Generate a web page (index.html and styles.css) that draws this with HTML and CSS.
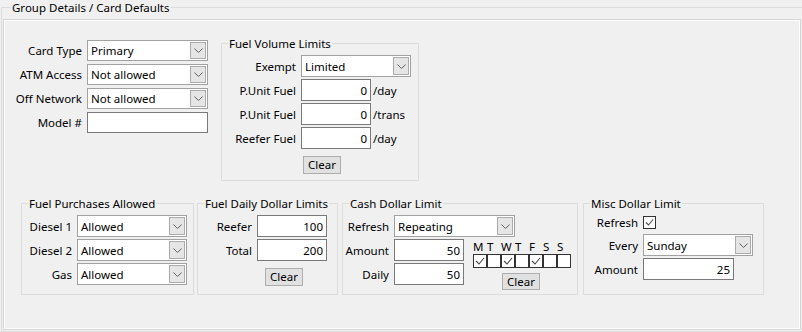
FILE: index.html
```html
<!DOCTYPE html>
<html lang="en">
<head>
  <meta charset="UTF-8">
  <title>Group Details / Card Defaults</title>
  <link rel="stylesheet" href="styles.css">
</head>
<body>

  <fieldset class="group">
    <legend>Group Details / Card Defaults</legend>
    <div class="panel">

      <div class="top-row">
        <div class="form card-form">
          <label>Card Type</label>
          <div class="combo"><span>Primary</span><i class="drop"><svg width="9" height="5" viewBox="0 0 9 5"><polyline points="0.5,0.5 4.5,4.5 8.5,0.5"/></svg></i></div>
          <label>ATM Access</label>
          <div class="combo"><span>Not allowed</span><i class="drop"><svg width="9" height="5" viewBox="0 0 9 5"><polyline points="0.5,0.5 4.5,4.5 8.5,0.5"/></svg></i></div>
          <label>Off Network</label>
          <div class="combo"><span>Not allowed</span><i class="drop"><svg width="9" height="5" viewBox="0 0 9 5"><polyline points="0.5,0.5 4.5,4.5 8.5,0.5"/></svg></i></div>
          <label>Model #</label>
          <input class="txt model" type="text" value="">
        </div>

        <fieldset class="box fuel-volume">
          <legend>Fuel Volume Limits</legend>
          <div class="form fv-form">
            <label>Exempt</label>
            <div class="combo"><span>Limited</span><i class="drop"><svg width="9" height="5" viewBox="0 0 9 5"><polyline points="0.5,0.5 4.5,4.5 8.5,0.5"/></svg></i></div>
            <label>P.Unit Fuel</label>
            <input class="txt num" type="text" value="0">
            <span class="unit">/day</span>
            <label>P.Unit Fuel</label>
            <input class="txt num" type="text" value="0">
            <span class="unit">/trans</span>
            <label>Reefer Fuel</label>
            <input class="txt num" type="text" value="0">
            <span class="unit">/day</span>
          </div>
          <button class="clear">Clear</button>
        </fieldset>
      </div>

      <div class="bottom-row">
        <fieldset class="box purchases">
          <legend>Fuel Purchases Allowed</legend>
          <div class="form purchases-form">
            <label>Diesel 1</label>
            <div class="combo"><span>Allowed</span><i class="drop"><svg width="9" height="5" viewBox="0 0 9 5"><polyline points="0.5,0.5 4.5,4.5 8.5,0.5"/></svg></i></div>
            <label>Diesel 2</label>
            <div class="combo"><span>Allowed</span><i class="drop"><svg width="9" height="5" viewBox="0 0 9 5"><polyline points="0.5,0.5 4.5,4.5 8.5,0.5"/></svg></i></div>
            <label>Gas</label>
            <div class="combo"><span>Allowed</span><i class="drop"><svg width="9" height="5" viewBox="0 0 9 5"><polyline points="0.5,0.5 4.5,4.5 8.5,0.5"/></svg></i></div>
          </div>
        </fieldset>

        <fieldset class="box daily">
          <legend>Fuel Daily Dollar Limits</legend>
          <div class="form daily-form">
            <label>Reefer</label>
            <input class="txt num" type="text" value="100">
            <label>Total</label>
            <input class="txt num" type="text" value="200">
          </div>
          <button class="clear">Clear</button>
        </fieldset>

        <fieldset class="box cash">
          <legend>Cash Dollar Limit</legend>
          <div class="form cash-form">
            <label>Refresh</label>
            <div class="combo"><span>Repeating</span><i class="drop"><svg width="9" height="5" viewBox="0 0 9 5"><polyline points="0.5,0.5 4.5,4.5 8.5,0.5"/></svg></i></div>
            <label>Amount</label>
            <input class="txt num" type="text" value="50">
            <div class="days">
              <div class="days-grid">
                <span>M</span><span>T</span><span>W</span><span>T</span><span>F</span><span>S</span><span>S</span>
                <i class="chk on"><svg viewBox="0 0 12 12"><polyline points="2,6 5,9 10,3"/></svg></i>
                <i class="chk"></i>
                <i class="chk on"><svg viewBox="0 0 12 12"><polyline points="2,6 5,9 10,3"/></svg></i>
                <i class="chk"></i>
                <i class="chk on"><svg viewBox="0 0 12 12"><polyline points="2,6 5,9 10,3"/></svg></i>
                <i class="chk"></i>
                <i class="chk"></i>
              </div>
              <button class="clear">Clear</button>
            </div>
            <label>Daily</label>
            <input class="txt num" type="text" value="50">
          </div>
        </fieldset>

        <fieldset class="box misc">
          <legend>Misc Dollar Limit</legend>
          <div class="form misc-form">
            <label>Refresh</label>
            <i class="chk small on"><svg viewBox="0 0 11 11"><polyline points="2,5.5 4.5,8 9,2.5"/></svg></i>
            <label>Every</label>
            <div class="combo"><span>Sunday</span><i class="drop"><svg width="9" height="5" viewBox="0 0 9 5"><polyline points="0.5,0.5 4.5,4.5 8.5,0.5"/></svg></i></div>
            <label>Amount</label>
            <input class="txt num wide" type="text" value="25">
          </div>
        </fieldset>
      </div>

    </div>
  </fieldset>

</body>
</html>
```

FILE: styles.css
```css
* { box-sizing: border-box; margin: 0; padding: 0; }
body {
  font-family: "Noto Sans", "Open Sans", sans-serif;
  font-size: 11.5px;
  line-height: 15px;
  color: #000;
  background: #f0f0f0;
  overflow: hidden;
}
fieldset { border: 1px solid #dcdcdc; min-width: 0; }
legend { margin-left: 6px; padding: 0 1px; }

/* outer group box + sunken panel */
.group { width: 803px; height: 332px; margin-left: 1px; padding: 4px 0 0 1px; }
.group > legend { margin-left: 8px; }
.panel {
  width: 798px;
  height: 311px;
  border: 1px solid #d5d5d5;
  box-shadow: inset 0 0 0 1px #fff;
  padding-top: 16px;
}

/* label / control grids */
.form { display: grid; align-items: center; }
.form label { text-align: right; padding-right: 5px; white-space: nowrap; }

.combo {
  height: 100%;
  display: flex;
  align-items: stretch;
  justify-content: space-between;
  background: #fff;
  border: 1px solid #a2a2a2;
  padding: 1px 1px 1px 3px;
}
.combo span { align-self: center; }
.drop {
  width: 16px;
  display: flex;
  align-items: center;
  justify-content: center;
  background: #e5e5e5;
  border: 1px solid #acacac;
}
.drop svg { fill: none; stroke: #606060; stroke-width: 1; }

.txt {
  height: 100%;
  width: 70px;
  border: 1px solid #7a7a7a;
  background: #fff;
  font: inherit;
  color: #000;
  text-align: right;
  padding: 0 3px;
  outline: none;
}
.txt.model { width: 121px; }
.txt.wide { width: 91px; }
.unit { padding-left: 2px; }

.clear {
  display: block;
  width: 38px;
  height: 18px;
  background: #e1e1e1;
  border: 1px solid #adadad;
  font: inherit;
  line-height: 16px;
  color: #000;
}

.chk {
  width: 14px;
  height: 14px;
  border: 1px solid #333;
  background: #fff;
  display: flex;
}
.chk svg { width: 12px; height: 12px; fill: none; stroke: #4a4a4a; stroke-width: 1.1; }
.chk.small { width: 13px; height: 13px; }
.chk.small svg { width: 11px; height: 11px; }

/* top row */
.top-row { display: flex; align-items: flex-start; gap: 13px; }
.card-form {
  grid-template-columns: 83px 121px;
  grid-auto-rows: 21px;
  row-gap: 3px;
  margin-top: 4px;
}
.fuel-volume { width: 198px; height: 145px; }
.fv-form {
  grid-template-columns: 79px 70px auto;
  grid-auto-rows: 22px;
  row-gap: 2px;
  margin-top: 4px;
}
.fv-form .combo { grid-column: span 2; width: 110px; }
.fuel-volume .clear { margin: 7px 0 0 81px; }

/* bottom row */
.bottom-row { display: flex; margin: 15px 0 0 17px; }
.bottom-row fieldset { height: 99px; }
.purchases { width: 173px; }
.daily { width: 141px; margin-left: 3px; }
.cash { width: 236px; margin-left: 4px; }
.misc { width: 181px; margin-left: 5px; }

.purchases-form {
  grid-template-columns: 55px 110px;
  grid-auto-rows: 22px;
  row-gap: 2px;
  margin-top: 4px;
}
.daily-form {
  grid-template-columns: 59px 70px;
  grid-auto-rows: 22px;
  row-gap: 2px;
  margin-top: 4px;
}
.daily .clear { margin: 7px 0 0 67px; }

.cash-form {
  grid-template-columns: 51px 70px auto;
  grid-auto-rows: 22px;
  row-gap: 2px;
  margin-top: 4px;
}
.cash-form .combo { grid-column: span 2; width: 121px; }
.days { grid-column: 3; grid-row: 2 / span 2; align-self: start; margin-left: 9px; }
.days-grid { display: grid; grid-template-columns: repeat(7, 14px); grid-template-rows: 15px 14px; }
.days .clear { height: 17px; margin: 5px 0 0 29px; }

.misc-form {
  grid-template-columns: 59px auto;
  grid-template-rows: 19px 22px 22px;
  row-gap: 2px;
  margin-top: 2px;
  justify-items: start;
}
.misc-form label { justify-self: stretch; }
.misc-form .combo { width: 110px; }
```
